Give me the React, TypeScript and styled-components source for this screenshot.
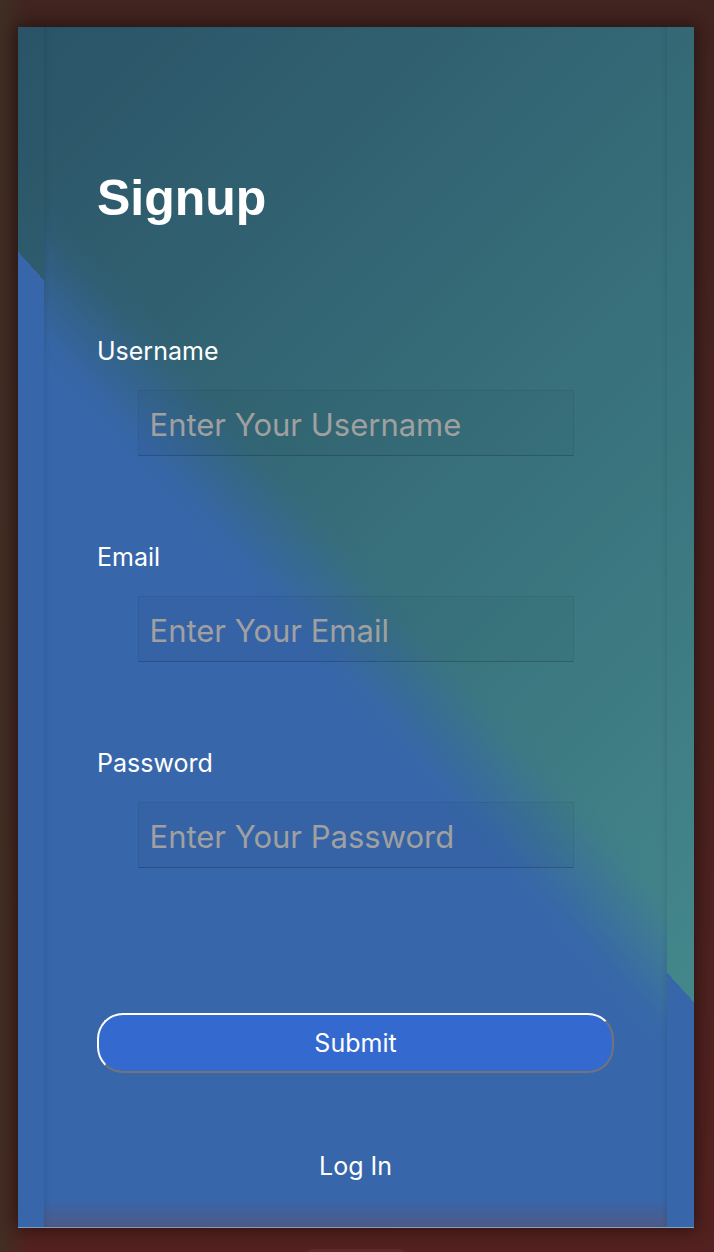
import React from "react";
import styled, { createGlobalStyle } from "styled-components";

const BLUE = "55,102,170";

const blueSharp = `linear-gradient(228deg, rgba(${BLUE},0) 50%, rgb(${BLUE}) 50%)`;
const blueSoft = `linear-gradient(228deg, rgba(${BLUE},0) 45.6%, rgba(${BLUE},0.1) 47.2%, rgba(${BLUE},0.5) 50%, rgba(${BLUE},0.9) 52.8%, rgb(${BLUE}) 54.4%)`;
const teal = `linear-gradient(135deg, #2a5367 0%, #43878b 87%, #488f90 100%)`;

const GlobalStyle = createGlobalStyle`
  html, body { margin: 0; padding: 0; }
  body {
    height: 1252px;
    overflow: hidden;
    background:
      linear-gradient(90deg, rgba(62,48,36,0.85) 0px, rgba(62,48,36,0) 30px),
      linear-gradient(180deg, #41231f 0%, #4a2220 60%, #53211f 100%);
    font-family: Inter, "Noto Sans", sans-serif;
  }
`;

const Page = styled.main`
  height: 1252px;
  box-sizing: border-box;
  padding: 27px 20px 0 18px;
  display: flex;
  flex-direction: column;
  align-items: flex-start;
`;

const Card = styled.section`
  flex-shrink: 0;
  width: 676px;
  height: 1201px;
  box-sizing: border-box;
  display: flex;
  padding: 0 27px 0 26px;
  border-bottom: 1px solid rgba(205, 215, 235, 0.55);
  box-shadow: 0 0 16px 2px rgba(0, 0, 0, 0.45);
  background: ${blueSharp}, ${teal};
`;

const Panel = styled.div`
  flex: 1;
  display: flex;
  flex-direction: column;
  padding: 146px 53px 0;
  box-shadow: inset 4px 0 4px -2px rgba(0, 0, 0, 0.08),
    inset -4px 0 4px -2px rgba(0, 0, 0, 0.08);
  background:
    linear-gradient(0deg, rgba(92, 82, 112, 0.6) 0px, rgba(92, 82, 112, 0) 28px),
    ${blueSoft},
    ${teal};
  background-size: 100% 100%, 676px 1200px, 676px 1200px;
  background-position: 0 0, -26px 0, -26px 0;
  background-repeat: no-repeat;
`;

const Title = styled.h1`
  margin: 0 0 114px;
  font: 700 50px/50px "Liberation Sans", Arial, sans-serif;
  color: #fff;
`;

const Form = styled.form`
  display: flex;
  flex-direction: column;
`;

const FieldList = styled.div`
  display: flex;
  flex-direction: column;
  gap: 87px;
`;

const Field = styled.div`
  display: flex;
  flex-direction: column;
  gap: 24px;
`;

const Label = styled.label`
  font: 400 25px/29px Inter, "Noto Sans", sans-serif;
  color: #fff;
`;

const Input = styled.input`
  align-self: center;
  width: 436px;
  height: 66px;
  box-sizing: border-box;
  margin: 0;
  padding: 2px 11px 0;
  background: rgba(0, 0, 0, 0.025);
  border: 1px solid rgba(0, 0, 0, 0.06);
  border-bottom-color: rgba(0, 0, 0, 0.18);
  border-radius: 0;
  outline: none;
  color: #fff;
  font: 400 31px Inter, "Noto Sans", sans-serif;
  &::placeholder {
    color: #a0a0a0;
  }
`;

const SubmitButton = styled.button`
  margin-top: 145px;
  width: 100%;
  height: 60px;
  box-sizing: border-box;
  border: 2px solid;
  border-color: #ffffff #747474 #747474 #ffffff;
  border-radius: 26px;
  background: #3469d0;
  color: #fff;
  font: 400 25px/1 Inter, "Noto Sans", sans-serif;
  cursor: pointer;
`;

const LinkButton = styled.button`
  align-self: center;
  margin-top: 81px;
  padding: 0;
  border: 0;
  background: none;
  color: #fff;
  font: 400 25px/25px Inter, "Noto Sans", sans-serif;
  cursor: pointer;
`;

const Handle = styled.div`
  flex-shrink: 0;
  align-self: center;
  margin-top: 21px;
  width: 98px;
  height: 8px;
  border-radius: 5px 5px 0 0;
  background: #5b2a2a;
`;

const fields = [
  { id: "username", label: "Username", placeholder: "Enter Your Username", type: "text" },
  { id: "email", label: "Email", placeholder: "Enter Your Email", type: "email" },
  { id: "password", label: "Password", placeholder: "Enter Your Password", type: "password" },
];

export default function App() {
  return (
    <>
      <GlobalStyle />
      <Page>
        <Card>
          <Panel>
            <Title>Signup</Title>
            <Form onSubmit={(e) => e.preventDefault()}>
              <FieldList>
                {fields.map((f) => (
                  <Field key={f.id}>
                    <Label htmlFor={f.id}>{f.label}</Label>
                    <Input id={f.id} type={f.type} placeholder={f.placeholder} />
                  </Field>
                ))}
              </FieldList>
              <SubmitButton type="submit">Submit</SubmitButton>
              <LinkButton type="button">Log In</LinkButton>
            </Form>
          </Panel>
        </Card>
        <Handle />
      </Page>
    </>
  );
}
